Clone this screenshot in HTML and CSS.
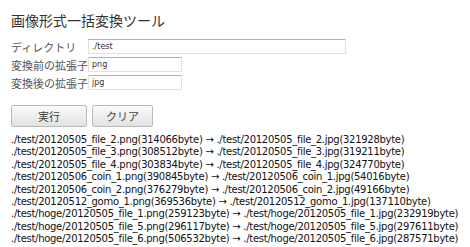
FILE: index.html
```html
<!DOCTYPE html>
<html lang="ja">
<head>
    <meta charset="UTF-8">
    <title>画像形式一括変換ツール</title>
    <link rel="stylesheet" href="styles.css">
</head>
<body>
    <div class="page">
        <h1>画像形式一括変換ツール</h1>
        <form class="form">
            <div class="row">
                <label>ディレクトリ</label>
                <input type="text" class="wide" value="./test">
            </div>
            <div class="row">
                <label>変換前の拡張子</label>
                <input type="text" value="png">
            </div>
            <div class="row">
                <label>変換後の拡張子</label>
                <input type="text" value="jpg">
            </div>
            <div class="buttons">
                <button type="button" class="run">実行</button>
                <button type="button" class="clear">クリア</button>
            </div>
        </form>
        <ul class="log">
            <li>./test/20120505_file_2.png(314066byte) → ./test/20120505_file_2.jpg(321928byte)</li>
            <li>./test/20120505_file_3.png(308512byte) → ./test/20120505_file_3.jpg(319211byte)</li>
            <li>./test/20120505_file_4.png(303834byte) → ./test/20120505_file_4.jpg(324770byte)</li>
            <li>./test/20120506_coin_1.png(390845byte) → ./test/20120506_coin_1.jpg(54016byte)</li>
            <li>./test/20120506_coin_2.png(376279byte) → ./test/20120506_coin_2.jpg(49166byte)</li>
            <li>./test/20120512_gomo_1.png(369536byte) → ./test/20120512_gomo_1.jpg(137110byte)</li>
            <li>./test/hoge/20120505_file_1.png(259123byte) → ./test/hoge/20120505_file_1.jpg(232919byte)</li>
            <li>./test/hoge/20120505_file_5.png(296117byte) → ./test/hoge/20120505_file_5.jpg(297611byte)</li>
            <li>./test/hoge/20120505_file_6.png(506532byte) → ./test/hoge/20120505_file_6.jpg(287571byte)</li>
        </ul>
    </div>
</body>
</html>
```

FILE: styles.css
```css
body {
    margin: 0;
    background: #fff;
    color: #222;
    font-family: "DejaVu Sans", "Noto Sans CJK JP", sans-serif;
}

.page {
    padding: 11px 11px 0 11px;
}

h1 {
    font-family: "Noto Sans CJK JP", sans-serif;
    font-size: 14px;
    font-weight: normal;
    color: #333;
    margin: 0 0 9px 0;
    line-height: 18px;
}

.form {
    margin: 0;
}

.row {
    display: flex;
    align-items: center;
    height: 17px;
    margin-bottom: 1px;
}

.row label {
    font-family: "Noto Sans CJK JP", sans-serif;
    font-size: 11px;
    color: #555;
    width: 77px;
}

.row input {
    box-sizing: border-box;
    width: 94px;
    height: 15px;
    padding: 0 3px;
    border: 1px solid #e2e2e2;
    border-top-color: #b0b0b0;
    font-family: "DejaVu Sans", sans-serif;
    font-size: 8px;
    color: #333;
    outline: none;
}

.row input.wide {
    width: 258px;
}

.buttons {
    display: flex;
    gap: 5px;
    margin-top: 14px;
}

.buttons button {
    box-sizing: border-box;
    height: 22px;
    border: 1px solid #bbb;
    border-radius: 2px;
    background: linear-gradient(to bottom, #fafafa, #e2e2e2);
    font-family: "Noto Sans CJK JP", sans-serif;
    font-size: 11px;
    color: #444;
    padding: 0;
}

.buttons .run {
    width: 76px;
}

.buttons .clear {
    width: 61px;
}

.log {
    list-style: none;
    margin: 7px 0 0 0;
    padding: 0;
    font-size: 10px;
    line-height: 12.4px;
    letter-spacing: -0.28px;
    white-space: nowrap;
    color: #111;
}
```
